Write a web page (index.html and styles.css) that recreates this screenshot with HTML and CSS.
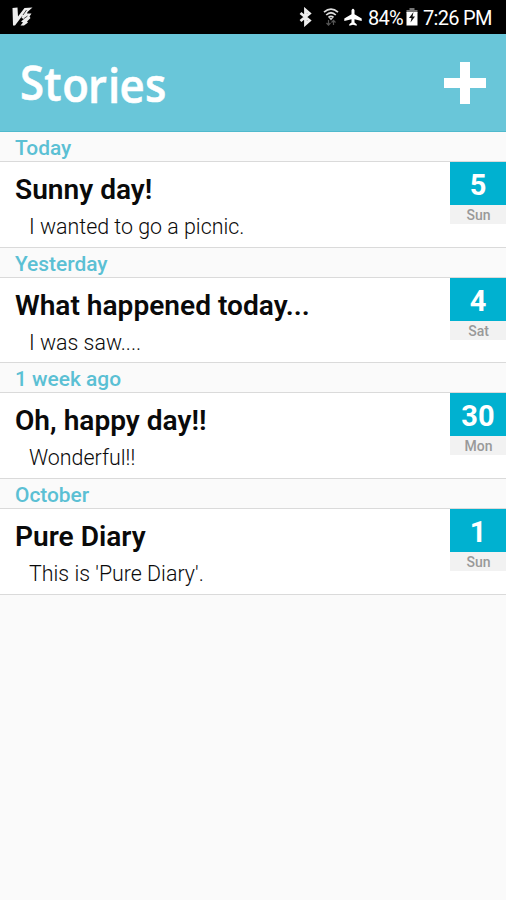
FILE: index.html
```html
<!DOCTYPE html>
<html lang="en">
<head>
  <meta charset="UTF-8">
  <meta name="viewport" content="width=device-width, initial-scale=1.0">
  <title>Stories</title>
  <link rel="stylesheet" href="styles.css">
</head>
<body>
  <div class="status-bar">
    <svg class="app-icon" width="22" height="20" viewBox="0 0 22 20">
      <path fill="#eee" d="M0.500 1L5.500 0.500L6 9.500L12.500 1L20.500 0.500L15.500 5L15 6.500L19.500 6.500L17.500 9.500L18.500 11L15 14.500L16 15.500L12 18.500L8.500 18.500L11 15.500L9 14.500L12 12L9.500 11L10.500 8.500L3 18.500L1 18.500Z"/>
      <path stroke="#000" stroke-width=".7" fill="none" d="M14.500 3L11 8M15.500 9L12 11.500"/>
    </svg>
    <div class="status-icons">
      <svg class="bluetooth" width="13" height="20" viewBox="0 0 13 20">
        <path d="M1.500 6L10.500 13.500L6.500 17V3L10.500 6.500L1.500 14" fill="none" stroke="#eee" stroke-width="2.800"/>
      </svg>
      <svg class="wifi" width="16" height="20" viewBox="0 0 16 20">
        <path d="M1 5.200Q8 -1 15 5.200M3.200 8Q8 3.500 12.800 8M5.500 10.500Q8 8.300 10.500 10.500" fill="none" stroke="#ddd" stroke-width="1.700"/>
        <path d="M6 11H10L8 13.500Z" fill="#ccc"/>
        <path d="M5.500 13V18M3.500 16L5.500 18.200L7.500 16M10.500 18V13.500M8.500 15.500L10.500 13.300L12.500 15.500" fill="none" stroke="#555" stroke-width="1.200"/>
      </svg>
      <svg class="plane" width="18" height="18" viewBox="0 0 18 18">
        <path fill="#fff" d="M7.500 2.200Q9 -0.500 10.500 2.200V6.200L17.700 10.500V13L10.500 11.300V14.500L12.700 16.200V17.700L9 16.800L5.300 17.700V16.200L7.500 14.500V11.300L0.300 13V10.500L7.500 6.200Z"/>
      </svg>
      <span class="percent">84%</span>
      <svg class="battery" width="12" height="18" viewBox="0 0 12 18">
        <path fill="#777" d="M3.500 0H8.500V2H11.500V5H0.500V2H3.500Z"/>
        <path fill="#fff" d="M0.500 4H11.500V17.500H0.500Z"/>
        <path fill="#111" d="M7.500 4L3 10H5.500L4.500 14.500L9 8.500H6.500Z"/>
      </svg>
      <span class="clock">7:26 PM</span>
    </div>
  </div>

  <header class="header">
    <svg class="logo" width="160" height="84" viewBox="0 0 160 84">
      <text transform="scale(.93 1)" x="0 26 45.500 73 94.500 107 134.500" y="59.500 60.500 61 62 62.500 62 61.500">Stories</text>
    </svg>
    <svg class="add" width="42" height="42" viewBox="0 0 42 42">
      <path fill="#fff" d="M16 0H26V16H42V26H26V42H16V26H0V16H16Z"/>
    </svg>
  </header>

  <main class="stories">
    <section class="group">
      <h2 class="group-name">Today</h2>
      <article class="story">
        <div class="story-text">
          <h3>Sunny day!</h3>
          <p>I wanted to go a picnic.</p>
        </div>
        <div class="date">
          <div class="day">5</div>
          <div class="weekday">Sun</div>
        </div>
      </article>
    </section>
    <section class="group">
      <h2 class="group-name">Yesterday</h2>
      <article class="story">
        <div class="story-text">
          <h3>What happened today...</h3>
          <p>I was saw....</p>
        </div>
        <div class="date">
          <div class="day">4</div>
          <div class="weekday">Sat</div>
        </div>
      </article>
    </section>
    <section class="group">
      <h2 class="group-name">1 week ago</h2>
      <article class="story">
        <div class="story-text">
          <h3>Oh, happy day!!</h3>
          <p>Wonderful!!</p>
        </div>
        <div class="date">
          <div class="day">30</div>
          <div class="weekday">Mon</div>
        </div>
      </article>
    </section>
    <section class="group">
      <h2 class="group-name">October</h2>
      <article class="story">
        <div class="story-text">
          <h3>Pure Diary</h3>
          <p>This is 'Pure Diary'.</p>
        </div>
        <div class="date">
          <div class="day">1</div>
          <div class="weekday">Sun</div>
        </div>
      </article>
    </section>
  </main>
</body>
</html>
```
FILE: styles.css
```css
* {
  box-sizing: border-box;
}
body {
  margin: 0;
  min-height: 100vh;
  background: #fafafa;
  font-family: Roboto, sans-serif;
  color: #0a0a0a;
}
h2, h3, p {
  margin: 0;
}

/* Status bar */
.status-bar {
  display: flex;
  justify-content: space-between;
  align-items: center;
  height: 34px;
  padding: 0 14px 0 12px;
  background: #000;
  color: #fff;
}
.status-icons {
  display: flex;
  align-items: center;
  font-size: 20px;
  line-height: 34px;
  letter-spacing: -0.7px;
  white-space: nowrap;
}
.bluetooth,
.wifi,
.plane,
.battery {
  flex: none;
}
.wifi {
  margin-left: 11px;
}
.plane {
  margin-left: 5px;
}
.percent {
  width: 35px;
  margin-left: 6px;
  padding-top: 2px;
}
.battery {
  margin-left: 3px;
}
.clock {
  width: 69px;
  margin-left: 5px;
  padding-top: 2px;
}

/* Header */
.header {
  display: flex;
  justify-content: space-between;
  align-items: center;
  height: 98px;
  padding: 0 20px;
  background: #69c6d9;
  border-bottom: 1px solid #4fbacd;
}
.logo {
  overflow: visible;
}
.logo text {
  font-family: "Open Sans", sans-serif;
  font-size: 47px;
  font-weight: 600;
  fill: #fff;
  stroke: #fff;
  stroke-width: 0.6px;
}

/* Story list */
.group {
  height: 115.7px;
}
.group-name {
  height: 30px;
  padding-left: 15px;
  border-bottom: 1px solid #dadada;
  font-size: 20.9px;
  font-weight: 500;
  line-height: 32px;
  color: #5bc0d4;
}
.story {
  display: flex;
  justify-content: space-between;
  height: 85.7px;
  background: #fff;
  border-bottom: 1px solid #dadada;
}
.story-text {
  padding: 11px 0 0 15px;
}
.story-text h3 {
  font-size: 28.1px;
  font-weight: 600;
  line-height: 34px;
}
.story-text p {
  padding-left: 14px;
  font-size: 21.4px;
  font-weight: 300;
  line-height: 40px;
}
.date {
  width: 56px;
  text-align: center;
}
.day {
  height: 43px;
  background: #00b1d0;
  color: #fff;
  font-size: 29px;
  font-weight: 700;
  line-height: 47px;
}
.weekday {
  height: 19px;
  padding-left: 1px;
  background: #f2f2f2;
  color: #999;
  font-size: 14px;
  font-weight: 500;
  line-height: 21px;
}
```
